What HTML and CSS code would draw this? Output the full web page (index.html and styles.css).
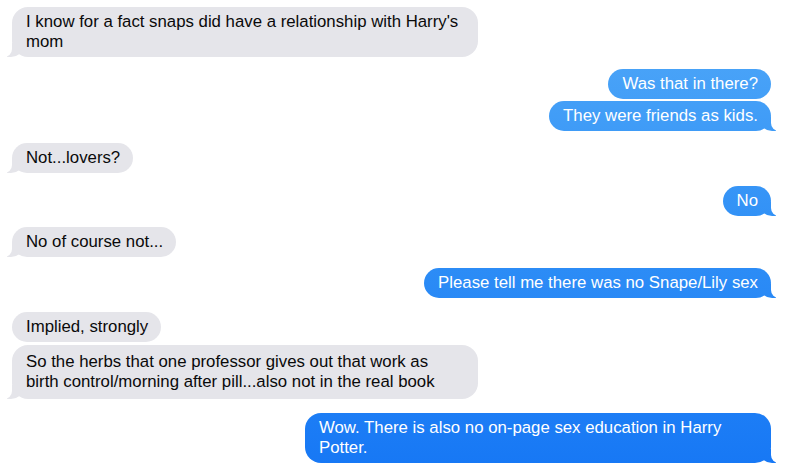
FILE: index.html
```html
<!DOCTYPE html>
<html>
<head>
<meta charset="utf-8">
<link rel="stylesheet" href="styles.css">
</head>
<body>
<div class="chat">
  <div class="msg them tail">I know for a fact snaps did have a relationship with Harry's mom</div>
  <div class="msg me gap">Was that in there?</div>
  <div class="msg me tail cont">They were friends as kids.</div>
  <div class="msg them tail gap">Not...lovers?</div>
  <div class="msg me tail gap13">No</div>
  <div class="msg them tail gap11">No of course not...</div>
  <div class="msg me tail gap11">Please tell me there was no Snape/Lily sex</div>
  <div class="msg them gap14">Implied, strongly</div>
  <div class="msg them tail cont3 tall">So the herbs that one professor gives out that work as birth control/morning after pill...also not in the real book</div>
  <div class="msg me tail gapw">Wow. There is also no on-page sex education in Harry Potter.</div>
</div>
</body>
</html>
```
FILE: styles.css
```css
html, body {
  margin: 0;
  padding: 0;
  background: #ffffff;
}
body {
  width: 786px;
  height: 474px;
  overflow: hidden;
  font-family: "Liberation Sans", Arial, sans-serif;
}
.chat {
  display: flex;
  flex-direction: column;
  padding: 7px 15px 0 12px;
}
.msg {
  position: relative;
  box-sizing: border-box;
  max-width: 466px;
  padding: 5px 13px 5px 14px;
  font-size: 16.8px;
  line-height: 20px;
  border-radius: 16px;
}
.them {
  align-self: flex-start;
  background: #e5e5ea;
  color: #0a0a0a;
}
.me {
  align-self: flex-end;
  color: #fff;
  background: linear-gradient(to bottom, #52aaf8 0px, #2f8ff6 240px, #1677f5 474px) fixed;
}
.tall { padding-top: 7px; padding-bottom: 7px; }
.gap { margin-top: 12px; }
.gap11 { margin-top: 11px; }
.gap13 { margin-top: 13px; }
.gap14 { margin-top: 14px; }
.gapw { margin-top: 14px; }
.cont { margin-top: 2px; }
.cont3 { margin-top: 3px; }

.tail::before,
.tail::after {
  content: "";
  position: absolute;
  bottom: 0;
}
.them.tail::before {
  left: -5px;
  width: 16px;
  height: 14px;
  background: #e5e5ea;
  border-bottom-right-radius: 12px 10px;
}
.them.tail::after {
  left: -10px;
  width: 10px;
  height: 16px;
  background: #fff;
  border-bottom-right-radius: 8px;
}
.me.tail::before {
  right: -5px;
  width: 16px;
  height: 14px;
  background: linear-gradient(to bottom, #52aaf8 0px, #2f8ff6 240px, #1677f5 474px) fixed;
  border-bottom-left-radius: 12px 10px;
}
.me.tail::after {
  right: -10px;
  width: 10px;
  height: 16px;
  background: #fff;
  border-bottom-left-radius: 8px;
}
```
